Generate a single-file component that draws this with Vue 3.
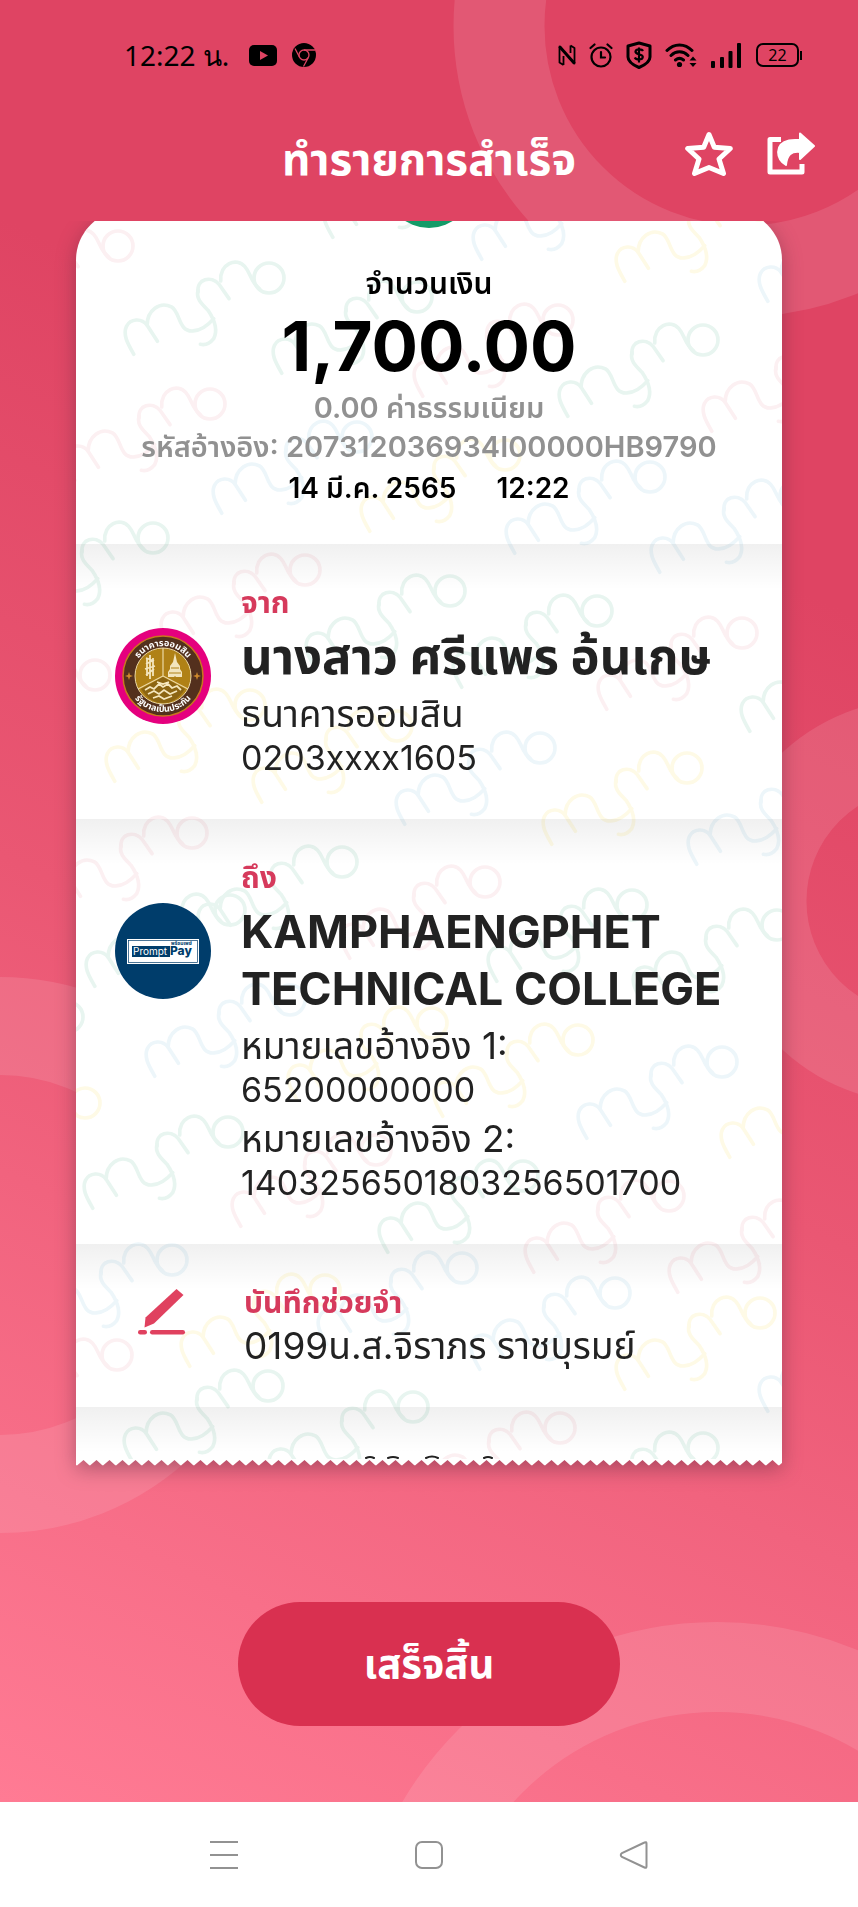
<script setup>
const stamps = {
  green: [[269, 278], [417, 297], [153, 538], [703, 340], [450, 591], [597, 611], [885, 655], [342, 862], [228, 1132], [68, 1017], [230, 910], [632, 905], [777, 925], [523, 1176], [268, 1386], [413, 1407], [703, 1448], [468, 161]],
  pink: [[118, 246], [210, 404], [558, 320], [847, 355], [305, 570], [95, 675], [192, 833], [742, 633], [485, 882], [376, 1150], [669, 1196], [117, 1355], [813, 1216], [560, 1428]],
  blue: [[357, 437], [617, 183], [903, 225], [650, 477], [795, 496], [540, 748], [832, 788], [290, 1000], [722, 1062], [172, 1260], [903, 1335], [615, 1293], [462, 1268]],
  yellow: [[505, 455], [760, 205], [250, 705], [397, 726], [687, 768], [85, 1103], [432, 1023], [578, 1040], [865, 1081], [325, 1290], [760, 1313]],
}
const marks = Object.entries(stamps).flatMap(([tone, spots]) => spots.map(([x, y]) => ({ tone, x, y })))
</script>

<template>
  <div class="screen">
    <main class="app">
      <svg class="rings" viewBox="0 0 858 1802" preserveAspectRatio="none" aria-hidden="true">
        <g fill="none" stroke="#fff" stroke-opacity="0.11">
          <circle cx="744" cy="26" r="245" stroke-width="91" />
          <circle cx="920" cy="901" r="158" stroke-width="89" />
          <circle cx="0" cy="1255" r="229" stroke-width="98" />
          <circle cx="717" cy="1987" r="320" stroke-width="90" />
        </g>
      </svg>

      <div class="status">
        <div class="status-left">
          <span class="clock">12:22 น.</span>
          <svg width="28" height="21" viewBox="0 0 28 21"><rect width="28" height="21" rx="5" /><path d="M11 6v9l8-4.500z" fill="#df4463" /></svg>
          <svg class="chrome" width="24" height="24" viewBox="0 0 24 24">
            <circle cx="12" cy="12" r="12" />
            <g fill="none" stroke="#df4463" stroke-width="1.300">
              <circle cx="12" cy="12" r="5" /><path d="M12 7h11M7.700 14.500L3 5.500M16.300 14.500L11.500 23.500" />
            </g>
            <circle cx="12" cy="12" r="3" />
          </svg>
        </div>
        <div class="status-right">
          <svg width="18" height="22" viewBox="0 0 18 22" fill="none" stroke="#000" stroke-width="2.400" stroke-linejoin="round"><path d="M5.500 21L1.500 18.500V2.500L16.500 19.500V4L12.500 1.500M5.500 21V12M12.500 1.500V9" stroke-width="1.800" /><path d="M1.500 2.500L16.500 19.500" stroke-width="3" /></svg>
          <svg width="24" height="25" viewBox="0 0 24 25" fill="none" stroke="#000" stroke-width="2.200" stroke-linecap="round"><circle cx="12" cy="14" r="9.500" /><path d="M12 9v5.500h4M1.500 5l4-3.500M22.500 5l-4-3.500" /></svg>
          <svg width="26" height="28" viewBox="0 0 26 28" fill="none" stroke="#000"><path d="M13 2l11 3v11c0 5-5 8-11 10.500C7 24 2 21 2 16V5z" stroke-width="3" stroke-linejoin="round" /><path d="M17 10c-1-2-7-2.500-7.500.5-.3 3.500 7.500 2 7.300 5.500-.3 3.500-6.800 3-8 .5M13 6.500v15" stroke-width="2.200" /></svg>
          <svg width="32" height="26" viewBox="0 0 32 26" fill="none" stroke="#000" stroke-width="3" stroke-linecap="round"><path d="M2 8.500C9 1 20 1 27 8.500M6 13.500c5-5 12-5 17 0M10.500 18c2.500-2 5.500-2 8 0" /><circle cx="14.500" cy="22.500" r="2.600" fill="#000" stroke="none" /><path d="M24.500 18.500l3.500-4 3.500 4zM24.500 21l3.500 4 3.500-4z" fill="#000" stroke="none" /></svg>
          <svg width="32" height="25" viewBox="0 0 32 25"><rect x="1" y="18" width="4" height="7" rx="1" /><rect x="10" y="14" width="4" height="11" rx="1" /><rect x="18.500" y="8" width="4" height="17" rx="1" /><rect x="27" y="0" width="4" height="25" rx="1" /></svg>
          <span class="battery">22</span>
        </div>
      </div>

      <header class="bar">
        <h1>ทำรายการสำเร็จ</h1>
        <div class="actions">
          <button type="button" aria-label="รายการโปรด">
            <svg width="48" height="48" viewBox="0 0 48 48" fill="none" stroke="#fff" stroke-width="5" stroke-linejoin="round"><path d="M24 4.500l5.300 12.700 16 1.300-11.300 10.500 4.500 14.500L24 37.500 9.500 43.500 14 29 2.700 18.500l16-1.300z" /></svg>
          </button>
          <button type="button" aria-label="แชร์">
            <svg width="48" height="44" viewBox="0 0 48 44" fill="none"><path d="M14 7.500H3V40h32v-8" stroke="#fff" stroke-width="5" stroke-linejoin="round" /><path d="M33 1.500L47 14 33 27v-7c-9-1-13 3-14 13C9 27 7 12 22 8.500c4-1 7-.5 11-.5z" fill="#fff" stroke="#fff" stroke-width="2" stroke-linejoin="round" /></svg>
          </button>
        </div>
      </header>

      <div class="viewport">
        <div class="lift">
          <article class="slip">
            <svg class="watermark" viewBox="76 210 706 1250" preserveAspectRatio="xMidYMin slice" aria-hidden="true">
              <defs>
                <g id="stamp" transform="scale(0.333) translate(-628 -203)" fill="none" stroke-width="11" stroke-linecap="round">
                  <path d="M222 432C205 402 188 375 200 348C212 325 245 322 262 345L293 393" />
                  <path d="M262 345C262 300 300 272 335 290C362 305 355 365 400 362C425 360 445 345 462 325" />
                  <path d="M415 240C408 265 425 280 445 300C465 330 475 360 462 385C450 400 435 405 422 402" />
                  <path d="M415 245C410 205 455 195 478 222L508 265" />
                  <path d="M483 212C480 160 530 140 555 168C575 190 572 215 600 236" />
                  <circle cx="628" cy="203" r="45" />
                </g>
              </defs>
              <use v-for="(m, i) in marks" :key="i" href="#stamp" :x="m.x" :y="m.y" :class="m.tone" />
            </svg>
            <span class="badge"></span>

            <section class="summary">
              <p class="caption">จำนวนเงิน</p>
              <p class="amount">1,700.00</p>
              <p class="fine">0.00 ค่าธรรมเนียม</p>
              <p class="fine">รหัสอ้างอิง: 207312036934I00000HB9790</p>
              <p class="when"><span>14 มี.ค. 2565</span><span>12:22</span></p>
            </section>

            <section class="party">
              <svg class="logo" viewBox="0 0 96 96" role="img" aria-label="ธนาคารออมสิน">
                <defs>
                  <path id="arcTop" d="M18 48a30 30 0 0 1 60 0" />
                  <path id="arcBottom" d="M12 48a36 36 0 0 0 72 0" />
                </defs>
                <circle cx="48" cy="48" r="48" fill="#e5007e" />
                <circle cx="48" cy="48" r="40" fill="#53301d" stroke="#c8781e" stroke-width="1.500" />
                <circle cx="48" cy="48" r="28" fill="#b08116" stroke="#ecd9a5" stroke-width="1" />
                <path d="M48 20v28M48 48L23 61M48 48l25 13" stroke="#ecd9a5" stroke-width="1.200" />
                <path d="M48 49L26 61q9 14 22 14t22-14z" fill="#8c6512" />
                <path d="M30 62l5-3 4 2 5-5 4 3 5-3 4 4 5-2 4 4M33 66l6-3 5 3 5-4 6 4 7-3M38 70l6-2 5 3 8-3M42 54l6 2 6-2" fill="none" stroke="#f5e7bd" stroke-width="1.800" />
                <path d="M35 27v24M31 30l8 3M31 36l8-4M30 41l10-3M31 47l8-6M32 30v18M38 30v18" stroke="#f3e5bd" stroke-width="1.800" />
                <path d="M60 25l2 9 3 4v3l2 3v5H53v-5l2-3v-3l3-4z" fill="#f3e5bd" />
                <path d="M56 40h8M54 45h12M60 48v5" stroke="#b08116" stroke-width="1" />
                <path d="M14 44l1 3 3 1-3 1-1 3-1-3-3-1 3-1zM82 44l1 3 3 1-3 1-1 3-1-3-3-1 3-1z" fill="#d08a2c" />
                <text class="seal"><textPath href="#arcTop" startOffset="50%">ธนาคารออมสิน</textPath></text>
                <text class="seal"><textPath href="#arcBottom" startOffset="50%">รัฐบาลเป็นประกัน</textPath></text>
              </svg>
              <div class="info">
                <h2>จาก</h2>
                <p class="name person">นางสาว ศรีแพร อ้นเกษ</p>
                <p class="detail">ธนาคารออมสิน</p>
                <p class="detail number">0203xxxx1605</p>
              </div>
            </section>

            <section class="party">
              <svg class="logo" viewBox="0 0 96 96" role="img" aria-label="PromptPay">
                <circle cx="48" cy="48" r="48" fill="#003d6b" />
                <rect x="12" y="36" width="72" height="25" fill="#fff" />
                <rect x="13.500" y="37.500" width="69" height="22" fill="none" stroke="#003d6b" stroke-width="0.700" />
                <rect x="17" y="43" width="38" height="11" fill="#003d6b" />
                <text class="pp light" x="18" y="52">Prompt</text>
                <text class="pp bold" x="55" y="52">Pay</text>
                <text class="pp tiny" x="56" y="42">พร้อมเพย์</text>
              </svg>
              <div class="info">
                <h2>ถึง</h2>
                <p class="name">KAMPHAENGPHET TECHNICAL COLLEGE</p>
                <p class="detail">หมายเลขอ้างอิง 1:</p>
                <p class="detail number">65200000000</p>
                <p class="detail next">หมายเลขอ้างอิง 2:</p>
                <p class="detail number">1403256501803256501700</p>
              </div>
            </section>

            <section class="party memo">
              <svg class="pencil" width="48" height="48" viewBox="0 0 48 48" fill="#e0415f"><path d="M38.500 1L45.500 7 16 35.500 6.500 39.500 7.500 29.500z" /><rect x="0" y="42" width="9" height="4.500" rx="2.200" /><rect x="12" y="42" width="35" height="4.500" rx="2.200" /></svg>
              <div class="info">
                <h2>บันทึกช่วยจำ</h2>
                <p class="detail">0199น.ส.จิราภร ราชบุรมย์</p>
              </div>
            </section>

            <section class="more">
              <svg width="132" height="4" viewBox="0 0 132 4" fill="none" stroke="#222" stroke-width="2" stroke-linecap="round" aria-hidden="true"><path d="M3 3q4-2 8 0M25 3q5-2 10 0M63 3q6-3 12 0M121 3q4-2 8 0" /></svg>
            </section>
          </article>
          <svg class="teeth" width="100%" height="7" aria-hidden="true">
            <defs><pattern id="tooth" width="13" height="7" patternUnits="userSpaceOnUse"><path d="M0 0H13V6L7.500 1 1 6.500 0 6z" fill="#fff" /></pattern></defs>
            <rect width="100%" height="7" fill="url(#tooth)" />
          </svg>
        </div>
      </div>

      <button type="button" class="done">เสร็จสิ้น</button>
    </main>

    <nav class="keys">
      <button type="button" aria-label="เมนู"><svg width="30" height="30" viewBox="0 0 30 30"><path d="M1 2h28M1 15h28M1 28h28" /></svg></button>
      <button type="button" aria-label="หน้าหลัก"><svg width="30" height="30" viewBox="0 0 30 30"><rect x="2" y="2" width="26" height="26" rx="6" /></svg></button>
      <button type="button" aria-label="ย้อนกลับ"><svg width="30" height="30" viewBox="0 0 30 30"><path d="M25.500 2.500L3 13q-2.500 2 0 4l22.500 10.500q2 1 2-1v-23q0-2-2-1z" /></svg></button>
    </nav>
  </div>
</template>

<style>
body {
  margin: 0;
}
</style>

<style scoped>
.screen {
  min-height: 100vh;
  display: flex;
  flex-direction: column;
  font-family: Inter, "Noto Sans Thai", "Noto Sans", sans-serif;
  color: #222;
}
p, h1, h2 {
  margin: 0;
}
button {
  border: 0;
  padding: 0;
  background: none;
  font-family: inherit;
  cursor: pointer;
}
svg {
  display: block;
  flex: none;
}
.app {
  position: relative;
  flex: 1;
  display: flex;
  flex-direction: column;
  align-items: center;
  padding-bottom: 76px;
  background: linear-gradient(205deg, #df4463 0%, #df4463 28%, #ea5773 57%, #ff7b94 100%);
  overflow: hidden;
}
.app > * {
  position: relative;
}
.app > .rings {
  position: absolute;
  inset: 0;
  width: 100%;
  height: 100%;
}
.status {
  align-self: stretch;
  height: 110px;
  padding: 0 55px 0 124px;
  display: flex;
  justify-content: space-between;
  align-items: center;
}
.status-left, .status-right {
  display: flex;
  align-items: center;
}
.clock {
  font: 28px/40px "Noto Sans", sans-serif;
  color: #000;
  margin-right: 20px;
}
.chrome {
  margin-left: 15px;
}
.status-right {
  gap: 13px;
}
.battery {
  position: relative;
  box-sizing: border-box;
  width: 43px;
  height: 24px;
  margin: 0 4px 0 1px;
  border: 2px solid #000;
  border-radius: 7px;
  font: 16px/20px "Noto Sans", sans-serif;
  text-align: center;
  color: #000;
}
.battery::after {
  content: "";
  position: absolute;
  right: -5px;
  top: 6px;
  width: 2px;
  height: 9px;
  background: #000;
}
.bar {
  align-self: stretch;
  height: 111px;
  box-sizing: border-box;
  padding: 18px 43px 0;
  display: grid;
  grid-template-columns: 1fr auto 1fr;
  align-items: start;
}
h1 {
  grid-column: 2;
  font-size: 44px;
  line-height: 62px;
  font-weight: 700;
  color: #fff;
}
.actions {
  display: flex;
  justify-content: flex-end;
  align-items: center;
  gap: 34px;
  padding-top: 2px;
}
.viewport {
  align-self: stretch;
  padding: 0 76px 40px;
  overflow: hidden;
}
.lift {
  margin-top: -11px;
  filter: drop-shadow(0 6px 10px rgba(90, 40, 60, 0.45));
}
.slip {
  position: relative;
  background: #fff;
  border-radius: 50px 50px 0 0;
  overflow: hidden;
}
.slip > section {
  position: relative;
}
.watermark {
  position: absolute;
  inset: 0;
  width: 100%;
  height: 100%;
}
.green { stroke: #e8f5f0; }
.pink { stroke: #fcf0f2; }
.blue { stroke: #edf6fa; }
.yellow { stroke: #fefae6; }
.badge {
  position: absolute;
  left: 50%;
  top: -68px;
  width: 86px;
  height: 86px;
  margin-left: -43px;
  border-radius: 50%;
  background: #149b68;
}
.summary {
  padding: 55px 0 36px;
  text-align: center;
  font-weight: 600;
  color: #000;
}
.caption {
  font-size: 30px;
  line-height: 36px;
}
.amount {
  margin: 7px 0 4px;
  font-size: 69px;
  line-height: 76px;
  font-weight: 700;
}
.fine {
  font-size: 29px;
  line-height: 39px;
  color: #919191;
}
.when {
  display: flex;
  justify-content: center;
  gap: 40px;
  margin-top: 3px;
  font-size: 28px;
  line-height: 39px;
}
.party {
  display: flex;
  gap: 30px;
  padding: 40px 30px 39px 39px;
}
.party, .more {
  background: linear-gradient(rgba(0, 0, 0, 0.06), rgba(0, 0, 0, 0) 46px);
}
.logo {
  width: 96px;
  height: 96px;
  margin-top: 44px;
}
.info {
  flex: 1;
  min-width: 0;
}
h2 {
  font-size: 30px;
  line-height: 36px;
  font-weight: 700;
  color: #d63a5c;
}
.name {
  margin: 8px 0 7px;
  font-size: 45px;
  line-height: 57px;
  font-weight: 700;
}
.person {
  font-size: 49px;
}
.detail {
  font-size: 37px;
  line-height: 44px;
}
.number {
  font-size: 34px;
}
.next {
  margin-top: 5px;
}
.memo {
  gap: 58px;
  padding-left: 62px;
}
.memo .detail {
  margin-top: 4px;
}
.pencil {
  margin-top: 4px;
}
.more {
  height: 52px;
  display: flex;
  justify-content: center;
  align-items: flex-end;
}
.seal {
  font-size: 9px;
  font-weight: 700;
  text-anchor: middle;
  fill: #fff;
}
.pp {
  font-size: 10px;
}
.light {
  fill: #fff;
}
.bold {
  font-size: 12px;
  font-weight: 800;
  fill: #003d6b;
}
.tiny {
  font-size: 5px;
  font-weight: 700;
  fill: #003d6b;
}
.done {
  margin-top: auto;
  width: 382px;
  height: 124px;
  border-radius: 62px;
  background: #d93050;
  color: #fff;
  font-size: 40px;
  line-height: 48px;
  font-weight: 700;
}
.keys {
  height: 105px;
  padding: 0 209px;
  display: flex;
  justify-content: space-between;
  align-items: center;
  background: #fff;
}
.keys svg {
  fill: none;
  stroke: #929292;
  stroke-width: 2;
}
</style>
